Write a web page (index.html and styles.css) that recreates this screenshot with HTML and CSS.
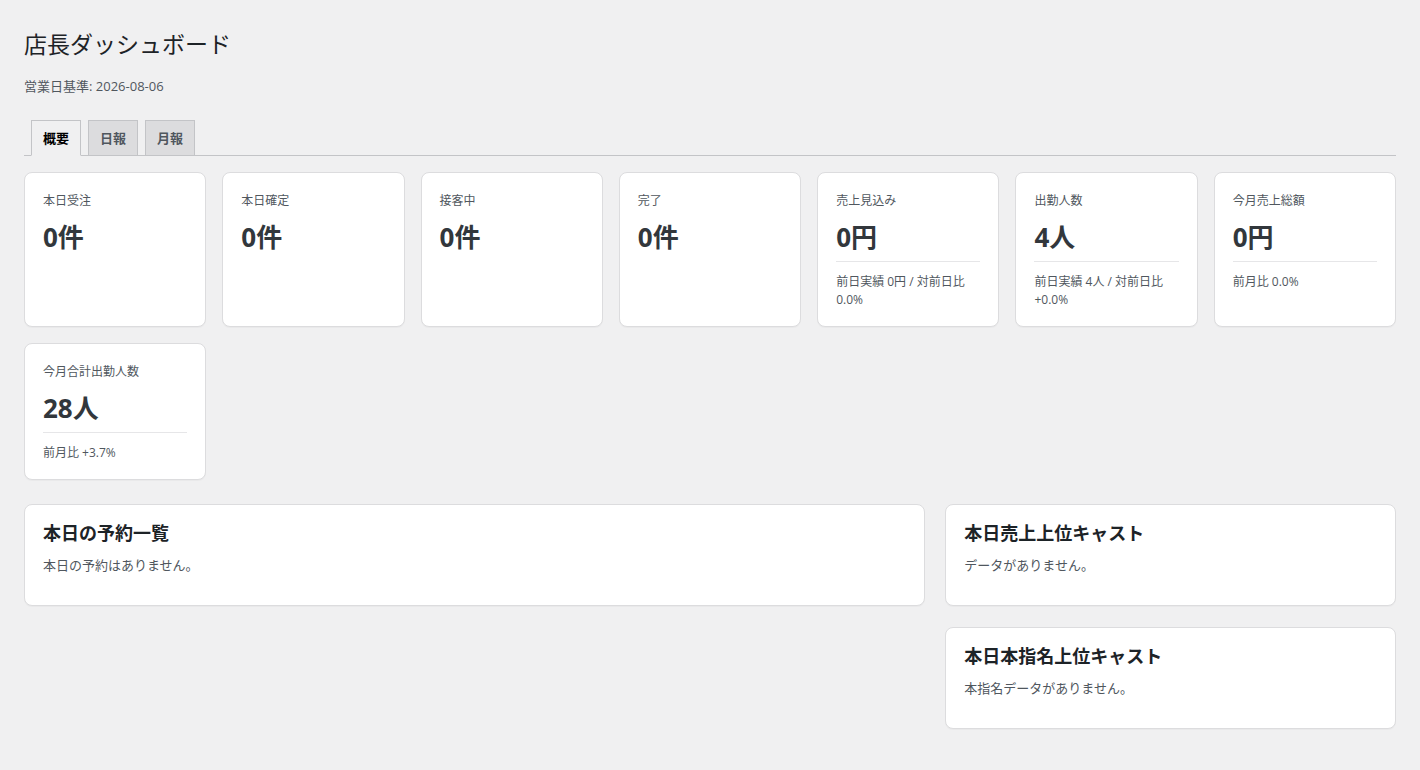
FILE: index.html
```html
<!DOCTYPE html>
<html lang="ja">
<head>
    <meta charset="UTF-8">
    <meta name="viewport" content="width=device-width, initial-scale=1.0">
    <title>店長ダッシュボード</title>
    <link rel="stylesheet" href="styles.css">
</head>
<body>
<div class="wrap">

    <h1>店長ダッシュボード</h1>
    <p class="subtitle">営業日基準: 2026-08-06</p>

    <!-- Tabs -->
    <nav class="nav-tabs">
        <a href="#" class="nav-tab active">概要</a>
        <a href="#" class="nav-tab">日報</a>
        <a href="#" class="nav-tab">月報</a>
    </nav>

    <!-- KPI cards -->
    <div class="kpi-grid">
        <div class="kpi">
            <div class="kpi-label">本日受注</div>
            <div class="kpi-value">0件</div>
        </div>
        <div class="kpi">
            <div class="kpi-label">本日確定</div>
            <div class="kpi-value">0件</div>
        </div>
        <div class="kpi">
            <div class="kpi-label">接客中</div>
            <div class="kpi-value">0件</div>
        </div>
        <div class="kpi">
            <div class="kpi-label">完了</div>
            <div class="kpi-value">0件</div>
        </div>
        <div class="kpi">
            <div class="kpi-label">売上見込み</div>
            <div class="kpi-value">0円</div>
            <div class="kpi-meta">前日実績 0円 / 対前日比 0.0%</div>
        </div>
        <div class="kpi">
            <div class="kpi-label">出勤人数</div>
            <div class="kpi-value">4人</div>
            <div class="kpi-meta">前日実績 4人 / 対前日比 +0.0%</div>
        </div>
        <div class="kpi">
            <div class="kpi-label">今月売上総額</div>
            <div class="kpi-value">0円</div>
            <div class="kpi-meta">前月比 0.0%</div>
        </div>
        <div class="kpi">
            <div class="kpi-label">今月合計出勤人数</div>
            <div class="kpi-value">28人</div>
            <div class="kpi-meta">前月比 +3.7%</div>
        </div>
    </div>

    <!-- Panels -->
    <div class="panels">
        <div class="panel-col">
            <div class="panel">
                <h2>本日の予約一覧</h2>
                <p>本日の予約はありません。</p>
            </div>
        </div>
        <div class="panel-col">
            <div class="panel">
                <h2>本日売上上位キャスト</h2>
                <p>データがありません。</p>
            </div>
            <div class="panel">
                <h2>本日本指名上位キャスト</h2>
                <p>本指名データがありません。</p>
            </div>
        </div>
    </div>

</div>
</body>
</html>
```

FILE: styles.css
```css
/* Reset */
* {
    margin: 0;
    padding: 0;
    box-sizing: border-box;
}

body {
    font-family: "Open Sans", "Noto Sans CJK JP", sans-serif;
    background-color: #f0f0f1;
    color: #3c434a;
    font-size: 13px;
}

.wrap {
    padding: 29px 24px 40px;
}

h1 {
    font-size: 23px;
    font-weight: 400;
    line-height: 30px;
    color: #1d2327;
}

.subtitle {
    margin-top: 18px;
    font-size: 13px;
    line-height: 18px;
    color: #50575e;
}

/* Tabs */
.nav-tabs {
    display: flex;
    gap: 7px;
    margin-top: 25px;
    padding-left: 7px;
    border-bottom: 1px solid #c3c4c7;
}

.nav-tab {
    display: block;
    margin-bottom: -1px;
    padding: 0 11px;
    height: 36px;
    line-height: 34px;
    font-size: 13px;
    font-weight: 700;
    color: #50575e;
    text-decoration: none;
    background-color: #dcdcde;
    border: 1px solid #c3c4c7;
}

.nav-tab.active {
    background-color: #f0f0f1;
    border-bottom-color: #f0f0f1;
    color: #000;
}

/* KPI cards */
.kpi-grid {
    display: grid;
    grid-template-columns: repeat(7, 1fr);
    gap: 16px;
    margin-top: 16px;
}

.kpi {
    background-color: #fff;
    border: 1px solid #dcdcde;
    border-radius: 8px;
    box-shadow: 0 1px 1px rgba(0, 0, 0, 0.03);
    padding: 19px 18px 17px;
}

.kpi-label {
    font-size: 12px;
    line-height: 18px;
    color: #50575e;
}

.kpi-value {
    margin-top: 9px;
    font-size: 26px;
    font-weight: 700;
    line-height: 36px;
    color: #32373c;
}

.kpi-meta {
    margin-top: 6px;
    padding-top: 11px;
    border-top: 1px solid #e6e6e8;
    font-size: 12px;
    line-height: 18px;
    color: #50575e;
}

/* Panels */
.panels {
    display: grid;
    grid-template-columns: 2fr 1fr;
    gap: 20px;
    margin-top: 24px;
    align-items: start;
}

.panel-col {
    display: flex;
    flex-direction: column;
    gap: 21px;
}

.panel {
    background-color: #fff;
    border: 1px solid #dcdcde;
    border-radius: 8px;
    box-shadow: 0 1px 1px rgba(0, 0, 0, 0.03);
    padding: 15px 18px 30px;
}

.panel h2 {
    font-size: 18px;
    font-weight: 700;
    line-height: 26px;
    color: #1d2327;
}

.panel p {
    margin-top: 9px;
    font-size: 13px;
    line-height: 20px;
    color: #50575e;
}
```
